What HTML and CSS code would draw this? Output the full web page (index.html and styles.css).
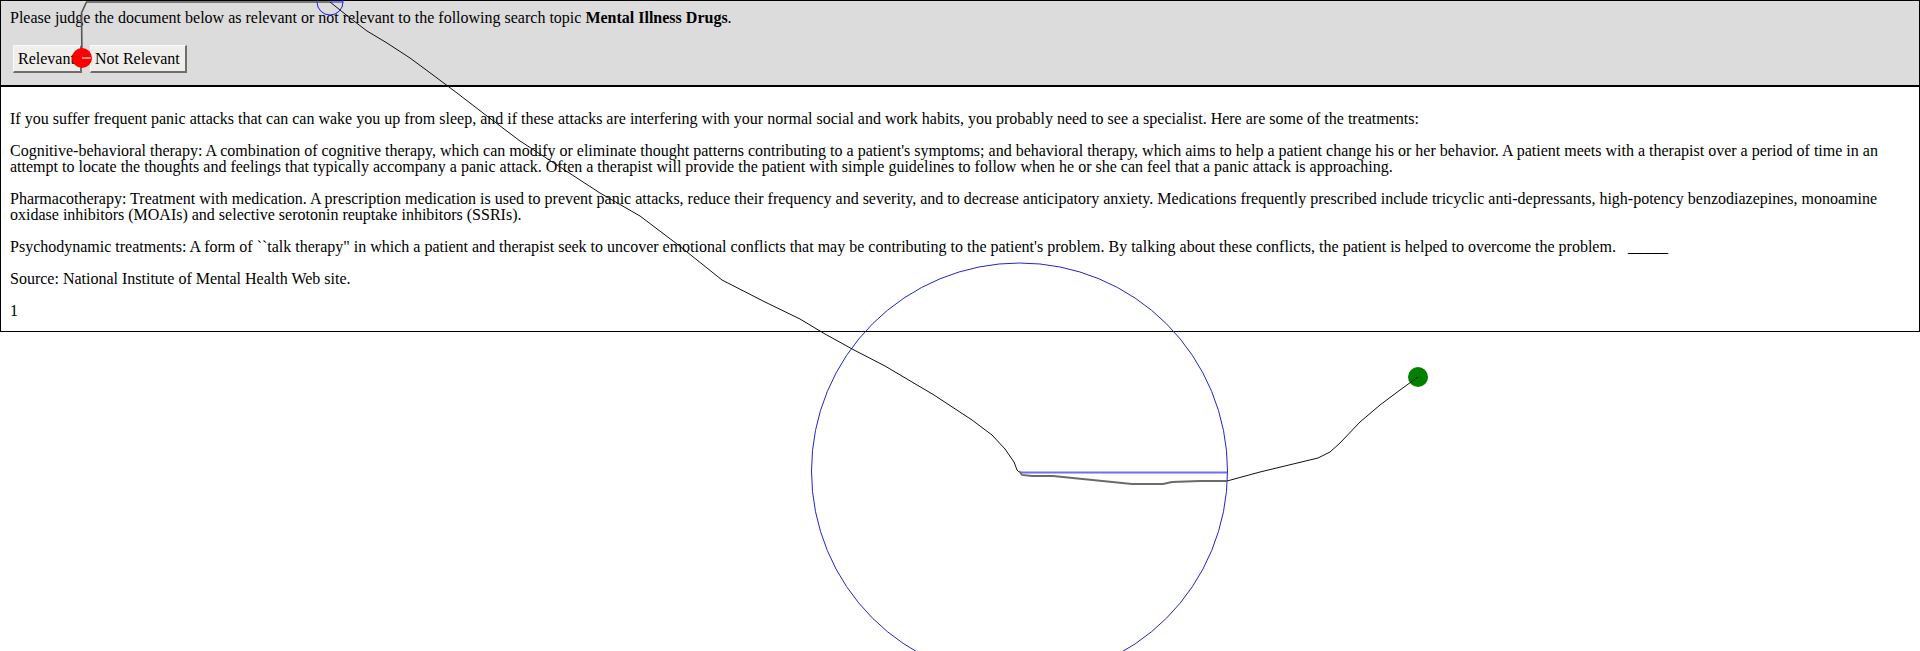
FILE: index.html
```html
<!DOCTYPE html>
<html>
<head>
<meta charset="utf-8">
<title>Relevance judgment</title>
<link rel="stylesheet" href="styles.css">
</head>
<body>
<div class="page">
  <div class="task">
    <p class="prompt">Please judge the document below as relevant or not relevant to the following search topic <b>Mental Illness Drugs</b>.</p>
    <div class="actions">
      <button class="btn">Relevant</button>
      <button class="btn">Not Relevant</button>
    </div>
  </div>
  <div class="doc">
    <p>If you suffer frequent panic attacks that can can wake you up from sleep, and if these attacks are interfering with your normal social and work habits, you probably need to see a specialist. Here are some of the treatments:</p>
    <p>Cognitive-behavioral therapy: A combination of cognitive therapy, which can modify or eliminate thought patterns contributing to a patient's symptoms; and behavioral therapy, which aims to help a patient change his or her behavior. A patient meets with a therapist over a period of time in an attempt to locate the thoughts and feelings that typically accompany a panic attack. Often a therapist will provide the patient with simple guidelines to follow when he or she can feel that a panic attack is approaching.</p>
    <p>Pharmacotherapy: Treatment with medication. A prescription medication is used to prevent panic attacks, reduce their frequency and severity, and to decrease anticipatory anxiety. Medications frequently prescribed include tricyclic anti-depressants, high-potency benzodiazepines, monoamine oxidase inhibitors (MOAIs) and selective serotonin reuptake inhibitors (SSRIs).</p>
    <p>Psychodynamic treatments: A form of ``talk therapy" in which a patient and therapist seek to uncover emotional conflicts that may be contributing to the patient's problem. By talking about these conflicts, the patient is helped to overcome the problem. &nbsp;&nbsp;_____</p>
    <p>Source: National Institute of Mental Health Web site.</p>
    <p>1</p>
  </div>
</div>
<svg class="trace" width="1920" height="651" viewBox="0 0 1920 651" xmlns="http://www.w3.org/2000/svg">
  <circle cx="1019.5" cy="471" r="208" fill="none" stroke="#2424c8" stroke-width="1"/>
  <circle cx="330" cy="2" r="13" fill="none" stroke="#2020d8" stroke-width="1"/>
  <path d="M330,2 H343" stroke="#2020d8" stroke-width="1"/>
  <path d="M82,58 L81.5,13 L86.5,2 L330,2" fill="none" stroke="#555" stroke-width="1.6"/>
  <path d="M330,2 L350,18 L367,31 L387,43 L410,58 L433,75 L457,93 L483,113 L520,141 L560,167 L600,193 L640,216 L677,244 L722,280 L765,302 L800,319 L825,334 L854,350 L885,366 L934,395 L972,420 L992,435 L1005,449 L1014,462 L1017,470 L1019,472" fill="none" stroke="#111" stroke-width="1"/>
  <path d="M1020,472.5 H1227" stroke="#6f6ff0" stroke-width="2"/>
  <path d="M1019,471 L1022,475 L1032,476 L1053,476 L1132,484 L1163,484 L1172,482 L1200,481 L1227,481" fill="none" stroke="#6a6a6a" stroke-width="1.8"/>
  <circle cx="1418" cy="377" r="10" fill="#008000"/>
  <path d="M1227,481 L1260,472 L1318,458 L1330,452 L1340,443 L1360,422 L1380,405 L1400,390 L1418,377" fill="none" stroke="#111" stroke-width="1"/>
  <circle cx="82" cy="58" r="10" fill="#ff0000"/>
  <path d="M82,58 H91" stroke="#f2f2f2" stroke-width="1.2"/>
</svg>
</body>
</html>
```

FILE: styles.css
```css
html, body {
  margin: 0;
  background: #ffffff;
}

body {
  font-family: "Liberation Serif", "Times New Roman", serif;
  font-size: 16px;
  line-height: 16px;
  color: #000;
}

.task {
  border: 1px solid #000;
  background: #dcdcdc;
  padding: 9px 9px 12px;
}

.prompt {
  margin: 0;
}

.actions {
  display: flex;
  gap: 8px;
  margin-top: 19px;
  padding-left: 3px;
}

.btn {
  font: inherit;
  line-height: 18px;
  box-sizing: border-box;
  height: 28px;
  margin: 0;
  padding: 3px 5px 3px 4px;
  color: #000;
  background: #f0eeeb;
  border-style: solid;
  border-width: 1px 2px 2px 1px;
  border-color: #fafafa #6e6e6e #6e6e6e #fafafa;
}

.doc {
  border: 1px solid #000;
  padding: 24px 9px 12px;
}

.doc p {
  margin: 0;
}

.doc p + p {
  margin-top: 16px;
}

.trace {
  position: absolute;
  left: 0;
  top: 0;
  pointer-events: none;
}
```
